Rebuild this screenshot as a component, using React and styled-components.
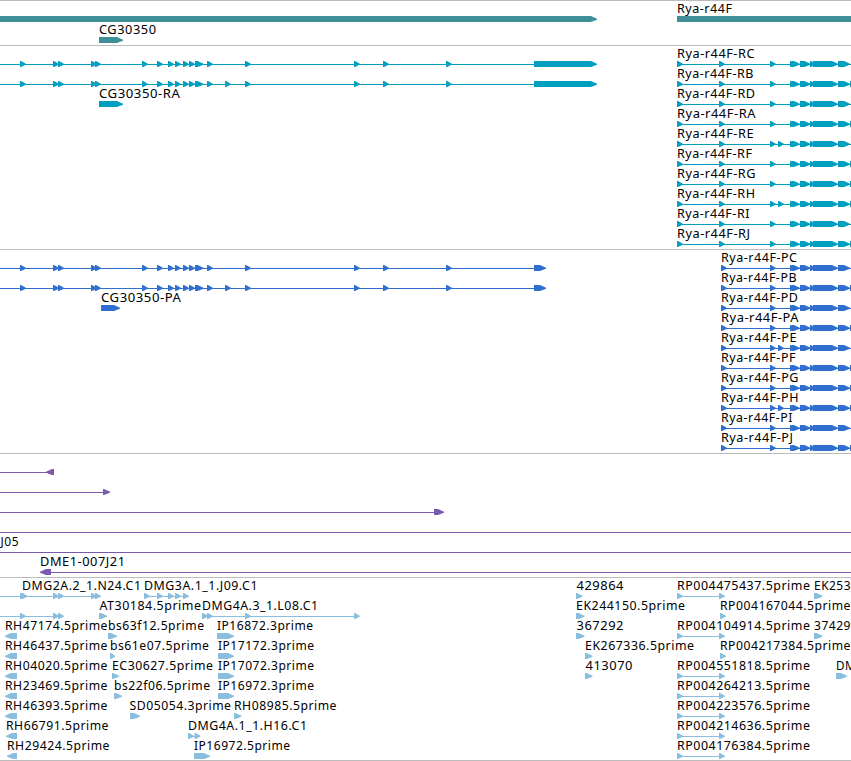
import React from "react";
import styled, { createGlobalStyle } from "styled-components";

const VIEW_WIDTH = 851;

const colors = {
  gene: "#3f8f96",
  transcript: "#009fc0",
  cds: "#306fcf",
  clone: "#7a5aae",
  est: "#8abedf",
};

// label: [text, x, width]
// feature: { line: [from, to], fwd: [[from, to]], rev: [[from, to]] }
const small = (...starts) => starts.map((x) => [x, x + 5.8]);

const commonExons = [20, 53, 58, 91, 95, 142, 157, 168, 175, 183, 189];
const exonsA = [...small(...commonExons), [195, 203.5], ...small(207, 245, 354, 383, 446)];
const exonsB = [...exonsA, ...small(225)];

const ryaTail = [
  [790, 795.8],
  [792, 799.8],
  [800, 808],
  [802, 810.5],
  [810, 815],
  [813, 838],
  [838, 850],
];

const ryaLane = (name, width, prefix, starts) => {
  const type = name.slice(-1);
  const extra = "EH".includes(type) ? [778] : [];
  const edge = "BAFGHJ".includes(type) ? [[850, 857]] : [];
  return {
    labels: [[`Rya-r44F-${name}`, prefix, width]],
    features: [
      { line: [starts[0], 851], fwd: [...small(...starts, 770, ...extra), ...ryaTail, ...edge] },
    ],
  };
};

const transcripts = [
  ["RC", 78], ["RB", 77], ["RD", 78.5], ["RA", 79], ["RE", 77],
  ["RF", 75.5], ["RG", 79], ["RH", 78.5], ["RI", 73], ["RJ", 73.5],
].map(([name, width]) => ryaLane(name, width, 677, [677, 719]));

const proteins = [
  ["PC", 76.5], ["PB", 76], ["PD", 77.5], ["PA", 78], ["PE", 76],
  ["PF", 75], ["PG", 78], ["PH", 78], ["PI", 72], ["PJ", 72.5],
].map(([name, width]) => ryaLane(name, width, 721, [721]));

const withLeft = (lanes, left) =>
  lanes.map((lane, i) =>
    left[i]
      ? {
          labels: [...(left[i].labels || []), ...lane.labels],
          features: [...left[i].features, ...lane.features],
        }
      : lane
  );

const rpPair = { line: [677, 719], fwd: small(677, 719) };

const tracks = [
  {
    color: colors.gene,
    laneHeight: 21,
    gap: 2,
    lanes: [
      { labels: [["Rya-r44F", 677, 55.5]], features: [{ fwd: [[0, 597], [677, 870]] }] },
      { labels: [["CG30350", 99, 57.5]], features: [{ fwd: [[99, 123]] }] },
    ],
  },
  {
    color: colors.transcript,
    lanes: withLeft(transcripts, [
      { features: [{ line: [0, 534], fwd: [...exonsA, [534, 597]] }] },
      { features: [{ line: [0, 534], fwd: [...exonsB, [534, 597]] }] },
      { labels: [["CG30350-RA", 99, 81.5]], features: [{ fwd: [[99, 123]] }] },
    ]),
  },
  {
    color: colors.cds,
    lanes: withLeft(proteins, [
      { features: [{ line: [0, 534], fwd: [...exonsA, [534, 546]] }] },
      { features: [{ line: [0, 534], fwd: [...exonsB, [534, 546]] }] },
      { labels: [["CG30350-PA", 101, 80.5]], features: [{ fwd: [[101, 120]] }] },
    ]),
  },
  {
    color: colors.clone,
    lanes: [
      { features: [{ line: [0, 50], rev: [[46, 54]] }] },
      { features: [{ line: [0, 104], fwd: [[103, 110]] }] },
      { features: [{ line: [0, 435], fwd: [[434, 444]] }] },
      { features: [{ line: [0, 851] }] },
      { labels: [["J05", 0.5, 18.5]], features: [{ line: [0, 851] }] },
      { labels: [["DME1-007J21", 40, 85.5]], features: [{ line: [45, 851], rev: [[40, 51]] }] },
    ],
  },
  {
    color: colors.est,
    gap: 2,
    lanes: [
      {
        labels: [
          ["DMG2A.2_1.N24.C1", 22, 119.5],
          ["DMG3A.1_1.J09.C1", 144, 114],
          ["429864", 576.5, 47.5],
          ["RP004475437.5prime", 677, 133.5],
          ["EK253", 814, 37],
        ],
        features: [
          { line: [0, 95], fwd: small(20, 21.5, 53, 58, 91, 95) },
          { line: [144, 183], fwd: small(144, 157, 168, 175, 183) },
          { fwd: [[576, 582.5]] },
          rpPair,
          { fwd: [[814, 822.5]] },
        ],
      },
      {
        labels: [
          ["AT30184.5prime", 99.5, 102],
          ["DMG4A.3_1.L08.C1", 202, 116.5],
          ["EK244150.5prime", 576, 109.5],
          ["RP004167044.5prime", 720, 131],
        ],
        features: [
          { line: [0, 58], fwd: small(20, 53, 58) },
          { fwd: [[99, 107]] },
          { line: [202, 354], fwd: small(202, 207, 245, 354) },
          { fwd: [[576, 584.5]] },
          { fwd: small(720) },
        ],
      },
      {
        labels: [
          ["RH47174.5prime", 5, 103],
          ["bs63f12.5prime", 108, 96.5],
          ["IP16872.3prime", 217, 96.5],
          ["367292", 576.5, 47.5],
          ["RP004104914.5prime", 677, 133.5],
          ["37429", 814, 37],
        ],
        features: [
          { rev: [[5, 17]] },
          { fwd: [[108, 117]] },
          { fwd: [[217, 234]] },
          { fwd: [[576, 584.5]] },
          rpPair,
          { fwd: [[814, 822.5]] },
        ],
      },
      {
        labels: [
          ["RH46437.5prime", 5, 103],
          ["bs61e07.5prime", 110, 99.5],
          ["IP17172.3prime", 218, 96.5],
          ["EK267336.5prime", 585, 109.5],
          ["RP004217384.5prime", 720, 131],
        ],
        features: [
          { rev: [[5, 17]] },
          { fwd: [[110, 115]] },
          { fwd: [[218, 234]] },
          { fwd: [[585, 592.5]] },
          { fwd: small(720) },
        ],
      },
      {
        labels: [
          ["RH04020.5prime", 5, 103],
          ["EC30627.5prime", 112, 101.5],
          ["IP17072.3prime", 218, 96.5],
          ["413070", 585.5, 47.5],
          ["RP004551818.5prime", 677, 133.5],
          ["DM", 836, 20],
        ],
        features: [
          { rev: [[5, 17]] },
          { fwd: [[112, 119]] },
          { fwd: [[218, 234]] },
          { fwd: [[585, 592.5]] },
          rpPair,
          { fwd: [[836, 847]] },
        ],
      },
      {
        labels: [
          ["RH23469.5prime", 5, 103],
          ["bs22f06.5prime", 114, 96.5],
          ["IP16972.3prime", 218, 96.5],
          ["RP004264213.5prime", 677, 133.5],
        ],
        features: [{ rev: [[5, 17]] }, { fwd: [[114, 122]] }, { fwd: [[218, 234]] }, rpPair],
      },
      {
        labels: [
          ["RH46393.5prime", 5, 103],
          ["SD05054.3prime", 129.5, 102],
          ["RH08985.5prime", 234, 103],
          ["RP004223576.5prime", 677, 133.5],
        ],
        features: [{ rev: [[5, 17]] }, { fwd: [[130, 140]] }, { fwd: [[234, 241.5]] }, rpPair],
      },
      {
        labels: [
          ["RH66791.5prime", 6, 103],
          ["DMG4A.1_1.H16.C1", 188, 119.5],
          ["RP004214636.5prime", 677, 133.5],
        ],
        features: [
          { rev: [[6, 17]] },
          { line: [188, 195], fwd: small(188, 194.5) },
          rpPair,
        ],
      },
      {
        labels: [
          ["RH29424.5prime", 7, 103],
          ["IP16972.5prime", 194, 96.5],
          ["RP004176384.5prime", 677, 133.5],
        ],
        features: [{ rev: [[7, 17]] }, { fwd: [[194, 210]] }, rpPair],
      },
    ],
  },
];

function forwardPoints([from, to]) {
  const head = Math.max(from + 1, to - 6);
  return `${from},15 ${head},15 ${to},17.8 ${to},18.8 ${head},21 ${from},21`;
}

function reversePoints([from, to]) {
  const head = Math.min(to - 1, from + 6);
  return `${to},15 ${head},15 ${from},17.8 ${from},18.8 ${head},21 ${to},21`;
}

function Feature({ line, fwd = [], rev = [] }) {
  return (
    <>
      {line && <rect x={line[0]} y="18" width={line[1] - line[0]} height="1" />}
      {fwd.map((span, i) => (
        <polygon key={`f${i}`} points={forwardPoints(span)} />
      ))}
      {rev.map((span, i) => (
        <polygon key={`r${i}`} points={reversePoints(span)} />
      ))}
    </>
  );
}

export default function App() {
  return (
    <>
      <GlobalStyle />
      <Browser>
        {tracks.map((track, t) => (
          <Track key={t} $gap={track.gap}>
            {track.lanes.map((lane, i) => (
              <Lane key={i} $height={track.laneHeight}>
                <Glyphs width={VIEW_WIDTH} height="22" $color={track.color}>
                  {lane.features.map((feature, f) => (
                    <Feature key={f} {...feature} />
                  ))}
                  {(lane.labels || []).map(([text, x, width]) => (
                    <Label
                      key={text}
                      x={x}
                      y="12"
                      textLength={width}
                      lengthAdjust="spacingAndGlyphs"
                    >
                      {text}
                    </Label>
                  ))}
                </Glyphs>
              </Lane>
            ))}
          </Track>
        ))}
      </Browser>
    </>
  );
}

const GlobalStyle = createGlobalStyle`
  body {
    margin: 0;
    background: #fff;
    overflow: hidden;
  }
`;

const Browser = styled.main`
  display: flex;
  flex-direction: column;
  width: ${VIEW_WIDTH}px;
  height: 761px;
  box-sizing: border-box;
  overflow: hidden;
  border-bottom: 1px solid #bbb;
`;

const Track = styled.section`
  display: flex;
  flex-direction: column;
  flex-shrink: 0;
  border-top: 1px solid #bbb;
  padding-bottom: ${({ $gap = 3 }) => $gap}px;
`;

const Lane = styled.div`
  height: ${({ $height = 20 }) => $height}px;
`;

const Glyphs = styled.svg`
  display: block;
  overflow: visible;
  fill: ${({ $color }) => $color};
`;

const Label = styled.text`
  font-family: "Noto Sans", "DejaVu Sans", sans-serif;
  font-size: 12px;
  letter-spacing: 0.5px;
  fill: #000;
`;
